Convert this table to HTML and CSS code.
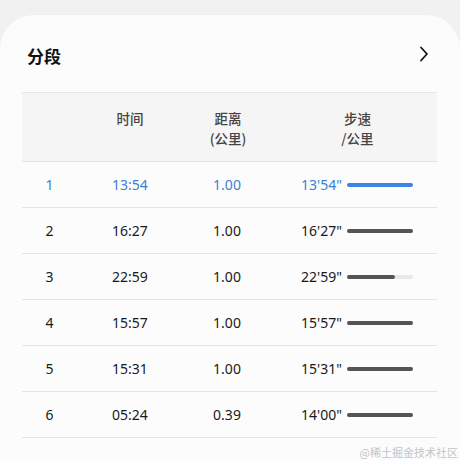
FILE: index.html
```html
<!DOCTYPE html>
<html lang="zh">
<head>
<meta charset="utf-8">
<link rel="stylesheet" href="styles.css">
</head>
<body>
<div class="card">
  <div class="title-row">
    <span class="title">分段</span>
    <svg class="chev" width="10" height="16" viewBox="0 0 10 16"><path d="M2 1.5 L8 8 L2 14.5" fill="none" stroke="#111" stroke-width="1.8" stroke-linecap="round" stroke-linejoin="round"/></svg>
  </div>
  <div class="table">
    <div class="row head">
      <div class="c1"></div>
      <div class="c2">时间</div>
      <div class="c3">距离<br>(公里)</div>
      <div class="c4h">步速<br>/公里</div>
    </div>
    <div class="row best">
      <div class="c1">1</div><div class="c2">13:54</div><div class="c3">1.00</div>
      <div class="c4"><span>13'54"</span><span class="track"><span class="bar" style="width:100%"></span></span></div>
    </div>
    <div class="row">
      <div class="c1">2</div><div class="c2">16:27</div><div class="c3">1.00</div>
      <div class="c4"><span>16'27"</span><span class="track"><span class="bar" style="width:100%"></span></span></div>
    </div>
    <div class="row">
      <div class="c1">3</div><div class="c2">22:59</div><div class="c3">1.00</div>
      <div class="c4"><span>22'59"</span><span class="track"><span class="bar" style="width:73%"></span></span></div>
    </div>
    <div class="row">
      <div class="c1">4</div><div class="c2">15:57</div><div class="c3">1.00</div>
      <div class="c4"><span>15'57"</span><span class="track"><span class="bar" style="width:100%"></span></span></div>
    </div>
    <div class="row">
      <div class="c1">5</div><div class="c2">15:31</div><div class="c3">1.00</div>
      <div class="c4"><span>15'31"</span><span class="track"><span class="bar" style="width:100%"></span></span></div>
    </div>
    <div class="row">
      <div class="c1">6</div><div class="c2">05:24</div><div class="c3">0.39</div>
      <div class="c4"><span>14'00"</span><span class="track"><span class="bar" style="width:100%"></span></span></div>
    </div>
  </div>
  <div class="wm">@稀土掘金技术社区</div>
</div>
</body>
</html>
```

FILE: styles.css
```css
html, body {
  margin: 0;
  padding: 0;
  background: #f1f1f1;
  width: 460px;
  height: 460px;
  overflow: hidden;
  font-family: "Noto Sans", "Noto Sans CJK SC", sans-serif;
}
.card {
  margin-top: 15px;
  height: 460px;
  background: #fcfcfc;
  border-radius: 34px 34px 0 0;
  padding: 0 23px 0 22px;
  position: relative;
}
.title-row {
  display: flex;
  align-items: center;
  justify-content: space-between;
  height: 77px;
  padding: 3px 8px 0 5px;
  box-sizing: border-box;
}
.title {
  font-size: 17px;
  font-weight: 700;
  color: #111;
  font-family: "Noto Sans CJK SC", sans-serif;
}
.chev { margin-top: -2px; }
.table {
  border-top: 1px solid #e6e6e6;
}
.row {
  display: grid;
  grid-template-columns: 54px 108px 86px 1fr;
  align-items: center;
  height: 45px;
  border-bottom: 1px solid #e4e4e4;
  font-size: 14px;
  color: #1a1a1a;
  text-align: center;
}
.row.head {
  height: 68px;
  background: #f5f5f5;
  font-family: "Noto Sans CJK SC", sans-serif;
  font-size: 13.5px;
  font-weight: 500;
  color: #444;
  line-height: 20px;
  align-items: start;
}
.head > div { padding-top: 15px; }
.head .c3 { padding-left: 2px; }
.c4h { padding-left: 8px; }
.row.best { color: #3b7fd6; }
.c1 { padding-left: 1px; }
.c4 {
  display: flex;
  align-items: center;
  justify-content: flex-end;
  gap: 5px;
  padding-right: 24px;
}
.track {
  width: 66px;
  height: 4px;
  border-radius: 2px;
  background: #e8e8e8;
  display: flex;
}
.bar {
  height: 4px;
  border-radius: 2px;
  background: #555;
}
.best .bar { background: #3d84ea; }
.wm {
  position: absolute;
  right: 2px;
  top: 429px;
  font-size: 11px;
  color: #c4c4c4;
  font-family: "Noto Sans CJK SC", sans-serif;
}
```
